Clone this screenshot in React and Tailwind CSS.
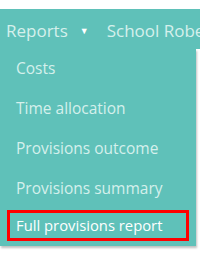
export default function App() {
  const items = ["Costs", "Time allocation", "Provisions outcome", "Provisions summary"];
  return (
    <div className="w-[200px] h-[255px] bg-white overflow-hidden" style={{ fontFamily: '"Open Sans", sans-serif' }}>
      <div className="h-[9px]" />
      <div className="bg-[#5fc1b9] w-[200px] h-[40px] pt-[3px] flex items-center pl-[6px] whitespace-nowrap overflow-hidden text-[17px] text-[#d5f0ec]">
        <span>Reports</span>
        <span className="ml-[12px] mr-[18px] text-[9px] text-white">▼</span>
        <span>School Robertson</span>
      </div>
      <div className="w-[196px] h-[197px] bg-[#5fc1b9] shadow-[1px_2px_2px_rgba(0,0,0,0.25)] flex flex-col text-[15.5px] text-[#d5f0ec]">
        {items.map((t) => (
          <div key={t} className="h-[40px] flex items-center pl-[16px]">{t}</div>
        ))}
        <div className="mx-[7px] mt-[1px] h-[31px] border-[3px] border-[#ff0000] flex items-center pl-[6px] text-white whitespace-nowrap text-[14.8px]">
          Full provisions report
        </div>
      </div>
    </div>
  );
}
